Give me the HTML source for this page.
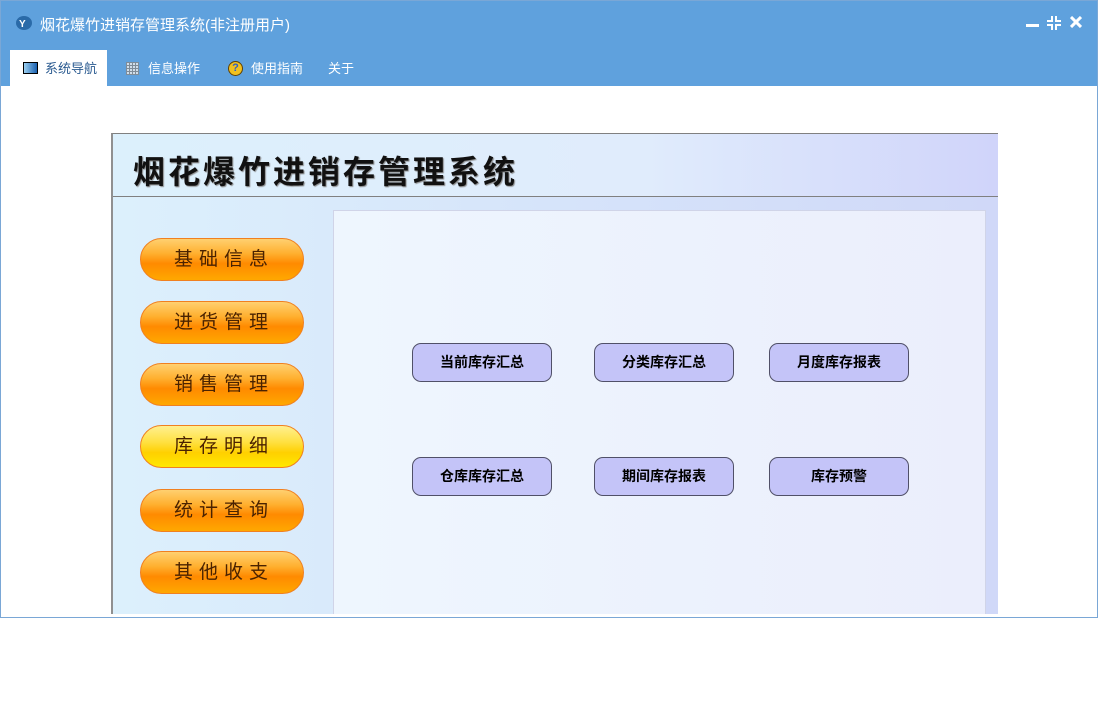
<!DOCTYPE html>
<html><head><meta charset="utf-8"><style>
*{margin:0;padding:0;box-sizing:border-box}
body{width:1098px;height:728px;background:#fff;position:relative;font-family:"Liberation Sans","Noto Sans CJK SC",sans-serif;overflow:hidden}
.win{position:absolute;left:0;top:0;width:1098px;height:618px;background:#fff}
.bd{position:absolute;left:0;top:0;width:1098px;height:618px;border:1px solid #7aa7d6;pointer-events:none}
.tb{position:absolute;left:0;top:0;width:1098px;height:86px;background:#5fa1dd}
.title{position:absolute;left:40px;top:14px;color:#fff;font-size:15px}
.tab{position:absolute;top:50px;height:36px;line-height:38px;font-size:13px;color:#fff}
.ob{position:absolute;left:140px;width:164px;height:43px;border-radius:22px;background:linear-gradient(#ffd070 0%,#ffb030 35%,#ff8a00 60%,#ffa800 100%);border:1px solid #f08020;text-align:center;line-height:42px;font-size:19px;letter-spacing:6px;padding-left:4px;color:#4a2200}
.ob.y{background:linear-gradient(#fff090 0%,#ffe040 40%,#ffd000 65%,#ffe800 100%)}
.bb{position:absolute;width:140px;height:39px;border:1px solid #505068;border-radius:9px;background:#c4c4f8;text-align:center;line-height:37px;font-size:14px;font-weight:bold;color:#000}
</style></head><body>
<div class="win">
<div class="tb">
<svg style="position:absolute;left:15px;top:15px" width="18" height="16"><ellipse cx="9" cy="8" rx="8" ry="7" fill="#2a6aa8"/><text x="4" y="12" font-size="10" fill="#fff" font-weight="bold">Y</text></svg>
<div class="title">烟花爆竹进销存管理系统(非注册用户)</div>
<div style="position:absolute;left:1026px;top:24px;width:13px;height:3px;background:#fff"></div>
<svg style="position:absolute;left:1047px;top:16px" width="14" height="14"><path d="M5 0V5H0M9 0V5H14M5 14V9H0M9 14V9H14" stroke="#fff" stroke-width="2" fill="none"/></svg>
<svg style="position:absolute;left:1070px;top:16px" width="12" height="12"><path d="M1 1L11 11M11 1L1 11" stroke="#fff" stroke-width="3"/></svg>
<div style="position:absolute;left:10px;top:50px;width:97px;height:37px;background:#fff"></div>
<div style="position:absolute;left:23px;top:62px;width:15px;height:12px;border:1px solid #000;background:linear-gradient(90deg,#9cd0f0,#1a60b0)"></div>
<div class="tab" style="left:45px;color:#2a5a90">系统导航</div>
<div style="position:absolute;left:126px;top:62px;width:13px;height:13px;background:repeating-linear-gradient(90deg,#888 0 1px,transparent 1px 3px),repeating-linear-gradient(0deg,#888 0 1px,#eee 1px 3px);opacity:.8"></div>
<div class="tab" style="left:148px">信息操作</div>
<div style="position:absolute;left:228px;top:61px;width:15px;height:15px;border-radius:50%;background:#f0c020;border:1px solid #604000;color:#3060c0;font-size:11px;text-align:center;line-height:13px;font-weight:bold">?</div>
<div class="tab" style="left:251px">使用指南</div>
<div class="tab" style="left:328px">关于</div>
</div>
<div style="position:absolute;left:111px;top:133px;width:887px;height:481px;overflow:hidden;border-left:2px solid #909090;border-top:1px solid #808080;background:linear-gradient(90deg,#dcf0fc,#d0d8f8)">
<div style="position:absolute;left:0;top:0;width:885px;height:63px;border-bottom:1px solid #808080;background:linear-gradient(90deg,#dcf0fc,#e0ecfc 60%,#d0d4fa)"></div>
<div style="position:absolute;left:20px;top:13px;font-size:32px;font-weight:bold;color:#111;letter-spacing:3px;text-shadow:1px 1px 1px #888">烟花爆竹进销存管理系统</div>
<div style="position:absolute;left:220px;top:76px;width:653px;height:420px;border:1px solid #d0d4e8;background:linear-gradient(90deg,#eef6fe,#ebeefc)"></div>
</div>
<div class="ob" style="top:238px">基础信息</div>
<div class="ob" style="top:301px">进货管理</div>
<div class="ob" style="top:363px">销售管理</div>
<div class="ob y" style="top:425px">库存明细</div>
<div class="ob" style="top:489px">统计查询</div>
<div class="ob" style="top:551px">其他收支</div>
<div class="bb" style="left:412px;top:343px">当前库存汇总</div>
<div class="bb" style="left:594px;top:343px">分类库存汇总</div>
<div class="bb" style="left:769px;top:343px">月度库存报表</div>
<div class="bb" style="left:412px;top:457px">仓库库存汇总</div>
<div class="bb" style="left:594px;top:457px">期间库存报表</div>
<div class="bb" style="left:769px;top:457px">库存预警</div>
<div class="bd"></div>
</div>
</body></html>
